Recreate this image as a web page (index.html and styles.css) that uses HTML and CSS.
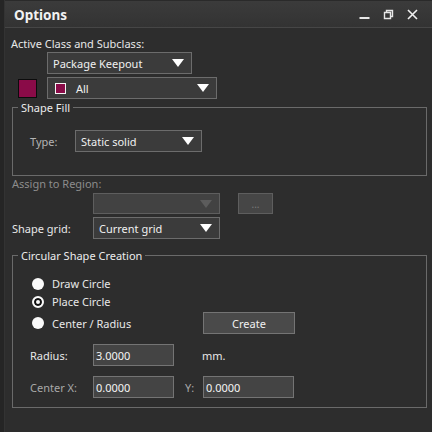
FILE: index.html
```html
<!DOCTYPE html>
<html>
<head>
<meta charset="utf-8">
<link rel="stylesheet" href="styles.css">
</head>
<body>
<div class="window">
  <div class="edge"></div>
  <div class="main">
    <div class="titlebar">
      <span class="title">Options</span>
      <div class="winbtns">
        <svg class="wb" width="11" height="12" viewBox="0 0 11 12"><rect x="0.5" y="8" width="10" height="2" fill="#e6e6e6"/></svg>
        <svg class="wb" width="11" height="12" viewBox="0 0 11 12"><path d="M3.5 3.5V1.5H9.5V7.5H7.5M1.5 3.5H7.5V9.5H1.5Z" fill="none" stroke="#e6e6e6" stroke-width="1.4"/></svg>
        <svg class="wb" width="11" height="12" viewBox="0 0 11 12"><path d="M1 1L10 10M10 1L1 10" stroke="#f0f0f0" stroke-width="1.6"/></svg>
      </div>
    </div>
    <div class="content">
      <div class="lbl-row">Active Class and Subclass:</div>
      <div class="row row-class">
        <div class="combo combo-class"><span>Package Keepout</span><svg class="arrow" width="12" height="8" viewBox="0 0 12 8"><path d="M0 0H12L6 8Z" fill="#fff"/></svg></div>
      </div>
      <div class="row row-sub">
        <div class="swatch"></div>
        <div class="combo combo-sub"><span class="mini"></span><span>All</span><svg class="arrow" width="12" height="8" viewBox="0 0 12 8"><path d="M0 0H12L6 8Z" fill="#fff"/></svg></div>
      </div>

      <fieldset class="group group-fill">
        <legend>Shape Fill</legend>
        <div class="row row-type">
          <span class="lbl dim">Type:</span>
          <div class="combo combo-type"><span>Static solid</span><svg class="arrow" width="12" height="8" viewBox="0 0 12 8"><path d="M0 0H12L6 8Z" fill="#fff"/></svg></div>
        </div>
      </fieldset>

      <div class="lbl-assign">Assign to Region:</div>
      <div class="row row-assign">
        <div class="combo combo-dis"><span></span><svg class="arrow" width="12" height="8" viewBox="0 0 12 8"><path d="M0 0H12L6 8Z" fill="#5c5c5c"/></svg></div>
        <div class="btn btn-dis">...</div>
      </div>
      <div class="row row-grid">
        <span class="lbl lbl-grid">Shape grid:</span>
        <div class="combo combo-grid"><span>Current grid</span><svg class="arrow" width="12" height="8" viewBox="0 0 12 8"><path d="M0 0H12L6 8Z" fill="#fff"/></svg></div>
      </div>

      <fieldset class="group group-circ">
        <legend>Circular Shape Creation</legend>
        <div class="radio r1"><span class="dot"></span><span>Draw Circle</span></div>
        <div class="radio r2"><span class="dot on"></span><span>Place Circle</span></div>
        <div class="row row-center">
          <div class="radio r3"><span class="dot"></span><span>Center / Radius</span></div>
          <div class="btn btn-create">Create</div>
        </div>
        <div class="row row-radius">
          <span class="lbl lbl-f">Radius:</span>
          <div class="input in-radius">3.0000</div>
          <span class="unit">mm.</span>
        </div>
        <div class="row row-cx">
          <span class="lbl lbl-f dim2">Center X:</span>
          <div class="input in-x">0.0000</div>
          <span class="lbl lbl-y dim2">Y:</span>
          <div class="input in-y">0.0000</div>
        </div>
      </fieldset>
    </div>
  </div>
</div>
</body>
</html>
```
FILE: styles.css
```css
html, body {
  margin: 0;
  padding: 0;
  background: #2d2d2d;
}
body {
  width: 432px;
  height: 432px;
  overflow: hidden;
  font-family: "Noto Sans", "Open Sans", sans-serif;
  font-size: 11px;
  color: #e8e8e8;
}
.window {
  display: flex;
  height: 432px;
}
.edge {
  width: 4px;
  background: #252525;
  border-right: 1px solid #333;
  flex: none;
}
.main {
  flex: 1;
  display: flex;
  flex-direction: column;
}
.main > *, .content > * {
  flex: none;
}
.titlebar {
  height: 28px;
  border-bottom: 1px solid #464646;
  background: linear-gradient(#3b3b3b, #333333);
  border-top: 1px solid #2a2a2a;
  box-sizing: border-box;
  display: flex;
  align-items: center;
  justify-content: space-between;
}
.title {
  font-weight: bold;
  font-size: 13.5px;
  color: #f2f2f2;
  margin-left: 9px;
  margin-top: 1px;
}
.winbtns {
  display: flex;
  gap: 13px;
  margin-right: 14px;
  margin-top: 1px;
}
.content {
  padding-left: 6px;
  display: flex;
  flex-direction: column;
}
.lbl-row {
  height: 16px;
  line-height: 16px;
  margin-top: 8px;
}
.row {
  display: flex;
  align-items: center;
}
.combo {
  box-sizing: border-box;
  height: 22px;
  border: 1px solid #6c6c6c;
  background: #3b3b3b;
  display: flex;
  align-items: center;
  padding-left: 5px;
  padding-right: 7px;
  color: #f0f0f0;
  flex: none;
}
.combo span:not(.mini) {
  flex: 1;
}
.arrow {
  flex: none;
}
.row-class {
  padding-left: 36px;
}
.combo-class {
  width: 145px;
}
.row-sub {
  margin-top: 3px;
}
.swatch {
  width: 17px;
  height: 17px;
  background: #8a0b48;
  border: 1px solid #0c0c0c;
  margin-left: 7px;
  margin-right: 10px;
}
.combo-sub {
  width: 170px;
  padding-left: 7px;
}
.mini {
  width: 9px;
  height: 9px;
  background: #8a0b48;
  border: 1px solid #f4f4f4;
  margin-right: 10px;
  flex: none;
}
.group {
  margin: 0;
  border: 1px solid #6a6a6a;
  padding: 0;
  min-width: 0;
  width: 415px;
  box-sizing: border-box;
}
.group legend {
  padding: 0 3px;
  margin-left: 5px;
  color: #ececec;
  line-height: 15px;
}
.group-fill {
  margin-left: 1px;
  margin-top: 1px;
  height: 76px;
}
.row-type {
  margin-top: 15px;
}
.lbl {
  display: inline-block;
  flex: none;
}
.dim {
  color: #b4b4b4;
}
.dim2 {
  color: #a8a8a8;
}
.row-type .lbl {
  margin-left: 17px;
  width: 45px;
}
.combo-type {
  width: 127px;
}
.lbl-assign {
  color: #8c8c8c;
  margin-left: 1px;
  height: 16px;
  line-height: 16px;
  margin-top: 0;
}
.row-assign {
  margin-top: 1px;
  padding-left: 82px;
}
.combo-dis {
  width: 127px;
  height: 21px;
  border-color: #5e5e5e;
  background: #424242;
}
.btn {
  box-sizing: border-box;
  border: 1px solid #6e6e6e;
  background: #474747;
  display: flex;
  align-items: center;
  justify-content: center;
  color: #f0f0f0;
  flex: none;
}
.btn-dis {
  width: 35px;
  height: 21px;
  margin-left: 18px;
  border-color: #5e5e5e;
  background: #464646;
  color: #7a7a7a;
  font-size: 10px;
}
.row-grid {
  margin-top: 3px;
}
.lbl-grid {
  margin-left: 1px;
  width: 81px;
}
.combo-grid {
  width: 127px;
}
.group-circ {
  margin-left: 1px;
  margin-top: 9px;
  height: 160px;
}
.radio {
  display: flex;
  align-items: center;
  height: 17px;
  flex: none;
}
.dot {
  box-sizing: border-box;
  width: 12px;
  height: 12px;
  border-radius: 50%;
  background: #fafafa;
  margin-left: 19px;
  margin-right: 8px;
  flex: none;
}
.dot.on {
  border: 2px solid #fafafa;
  background: #fafafa;
  box-shadow: inset 0 0 0 2px #111;
}
.r1 {
  margin-top: 12px;
}
.r2 {
  margin-top: 1px;
}
.row-center {
  margin-top: 2px;
}
.r3 {
  width: 190px;
}
.btn-create {
  width: 92px;
  height: 22px;
  background: #4a4a4a;
  border-color: #747474;
}
.row-radius {
  margin-top: 10px;
}
.lbl-f {
  margin-left: 17px;
  width: 63px;
}
.input {
  box-sizing: border-box;
  height: 22px;
  border: 1px solid #747474;
  background: #444444;
  padding-left: 2px;
  display: flex;
  align-items: center;
  color: #f4f4f4;
  flex: none;
}
.in-radius, .in-x {
  width: 81px;
}
.unit {
  margin-left: 28px;
}
.row-cx {
  margin-top: 10px;
}
.lbl-y {
  margin-left: 11px;
  width: 18px;
}
.in-y {
  width: 91px;
}
```
